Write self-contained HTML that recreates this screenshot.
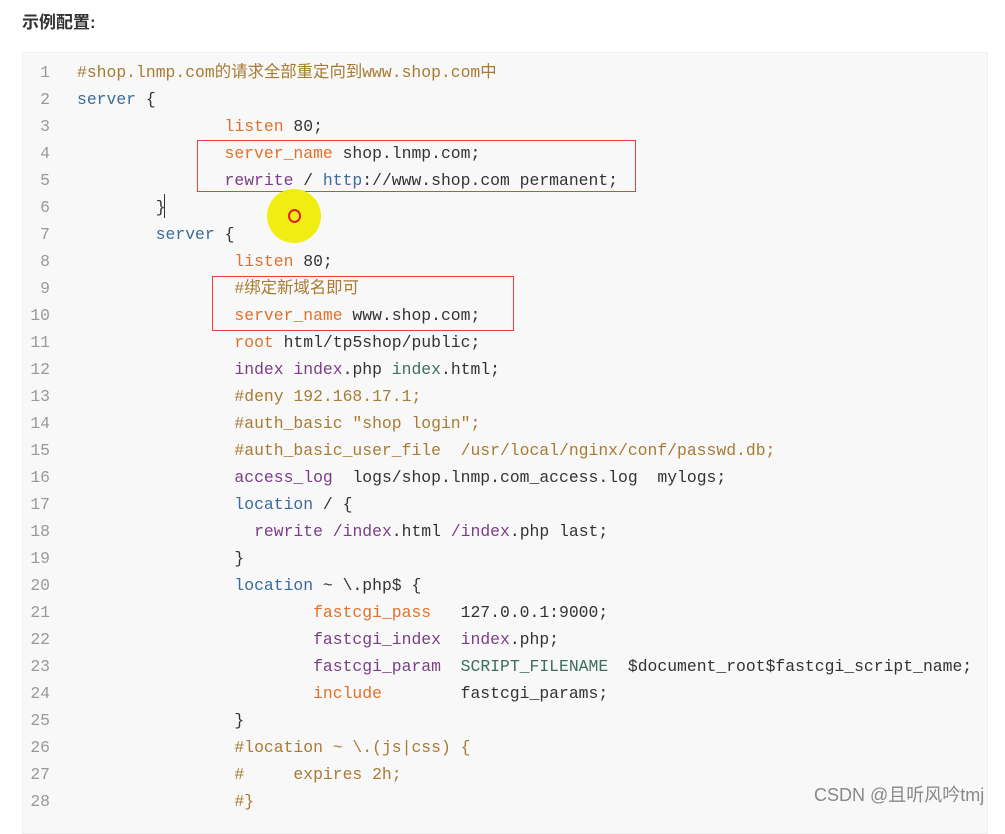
<!DOCTYPE html>
<html><head><meta charset="utf-8"><style>
body{margin:0;width:1005px;height:812px;background:#fff;overflow:hidden;position:relative;font-family:"Liberation Sans","Noto Sans CJK SC",sans-serif}
.t{position:absolute;left:22px;top:8px;font-size:17px;font-weight:bold;color:#333}
.blk{position:absolute;left:22px;top:52px;width:964px;height:780px;background:#f8f8f8;border:1px solid #f0f0f0}
pre{margin:0;position:absolute;top:59px;font-family:"Liberation Mono","Noto Sans CJK SC",monospace;font-size:16.4px;line-height:27px;color:#333}
.n{left:24px;width:26px;text-align:right;color:#999}
.c{left:77px}
.m{color:#a77b33}.k{color:#3d6a9c}.o{color:#e0712b}.p{color:#7a3e85}.g{color:#3c6e5a}
.box{position:absolute;border:1px solid #f03c3c}
</style></head><body>
<div class="t">示例配置:</div>
<div class="blk"></div>
<pre class="n">1
2
3
4
5
6
7
8
9
10
11
12
13
14
15
16
17
18
19
20
21
22
23
24
25
26
27
28</pre>
<pre class="c"><span class="m">#shop.lnmp.com的请求全部重定向到www.shop.com中</span>
<span class="k">server</span> {
               <span class="o">listen</span> 80;
               <span class="o">server_name</span> shop.lnmp.com;
               <span class="p">rewrite</span> / <span class="k">http</span>://www.shop.com permanent;
        }
        <span class="k">server</span> {
                <span class="o">listen</span> 80;
                <span class="m">#绑定新域名即可</span>
                <span class="o">server_name</span> www.shop.com;
                <span class="o">root</span> html/tp5shop/public;
                <span class="p">index</span> <span class="p">index</span>.php <span class="g">index</span>.html;
                <span class="m">#deny 192.168.17.1;</span>
                <span class="m">#auth_basic "shop login";</span>
                <span class="m">#auth_basic_user_file  /usr/local/nginx/conf/passwd.db;</span>
                <span class="p">access_log</span>  logs/shop.lnmp.com_access.log  mylogs;
                <span class="k">location</span> / {
                  <span class="p">rewrite</span> <span class="p">/index</span>.html <span class="p">/index</span>.php last;
                }
                <span class="k">location</span> ~ \.php$ {
                        <span class="o">fastcgi_pass</span>   127.0.0.1:9000;
                        <span class="p">fastcgi_index</span>  <span class="p">index</span>.php;
                        <span class="p">fastcgi_param</span>  <span class="g">SCRIPT_FILENAME</span>  $document_root$fastcgi_script_name;
                        <span class="o">include</span>        fastcgi_params;
                }
                <span class="m">#location ~ \.(js|css) {</span>
                <span class="m">#     expires 2h;</span>
                <span class="m">#}</span></pre>
<div class="box" style="left:197px;top:140px;width:437px;height:50px"></div>
<div class="box" style="left:212px;top:276px;width:300px;height:53px"></div>
<div style="position:absolute;left:164px;top:194px;width:1px;height:24px;background:#333"></div>
<div style="position:absolute;left:267px;top:189px;width:54px;height:54px;border-radius:50%;background:#f0ee10"></div>
<div style="position:absolute;left:288px;top:209px;width:9px;height:10px;border:2px solid #e02020;border-radius:50%"></div>
<div style="position:absolute;left:814px;top:781px;font-size:18px;color:#888">CSDN @且听风吟tmj</div>
</body></html>
